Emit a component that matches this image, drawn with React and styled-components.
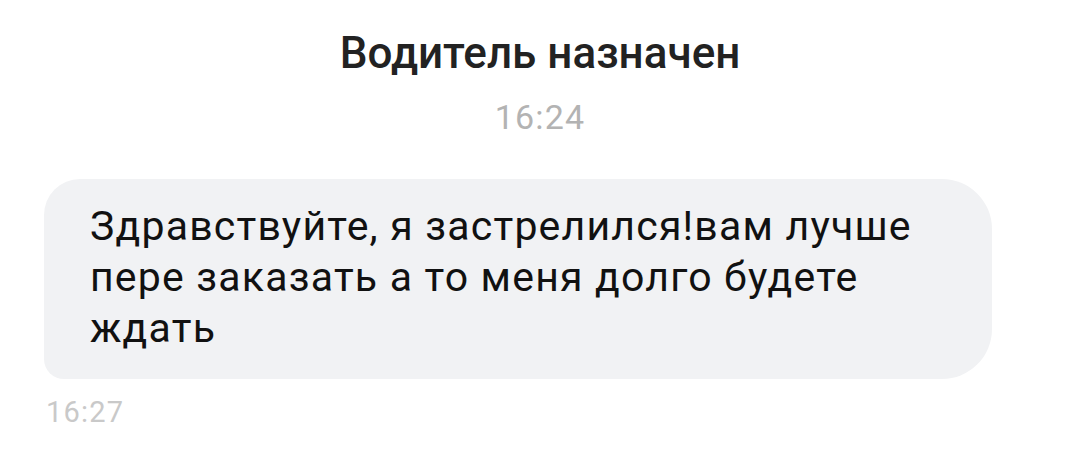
import styled, { createGlobalStyle } from 'styled-components'

const Global = createGlobalStyle`
  html, body { margin: 0; padding: 0; background: #fff; }
  body { font-family: Roboto, "Noto Sans", sans-serif; }
`

const Screen = styled.div`
  width: 1080px; height: 455px;
  display: flex; flex-direction: column;
  overflow: hidden;
`

const Header = styled.header`
  display: flex; flex-direction: column; align-items: center;
  padding-top: 26px;
`

const Title = styled.h1`
  margin: 0;
  font-size: 44px; font-weight: 500; line-height: 54px;
  color: #222;
`

const Stamp = styled.div`
  font-size: ${p => p.size || 30}px;
  line-height: 1;
  letter-spacing: 1.2px;
  color: ${p => p.tone || '#b3b3b3'};
  margin-top: ${p => p.top || 0}px;
  margin-left: ${p => p.left || 0}px;
`

const Thread = styled.section`
  display: flex; flex-direction: column; align-items: flex-start;
  padding: 0 88px 0 44px;
  margin-top: 45px;
`

const Bubble = styled.div`
  width: 948px; box-sizing: border-box;
  min-height: 200px;
  padding: 22px 40px 25px 46px;
  background: #f1f2f4;
  border-radius: 36px 50px 50px 20px;
  font-size: 41px; line-height: 51px;
  letter-spacing: 1.2px;
  color: #111;
`

export default function App() {
  return <Screen>
    <Global />
    <Header>
      <Title>Водитель назначен</Title>
      <Stamp size={34} top={20}>16:24</Stamp>
    </Header>
    <Thread>
      <Bubble>Здравствуйте, я застрелился!вам лучше пере заказать а то меня долго будете ждать</Bubble>
      <Stamp size={29} top={19} left={2} tone='#c9c9c9'>16:27</Stamp>
    </Thread>
  </Screen>
}
